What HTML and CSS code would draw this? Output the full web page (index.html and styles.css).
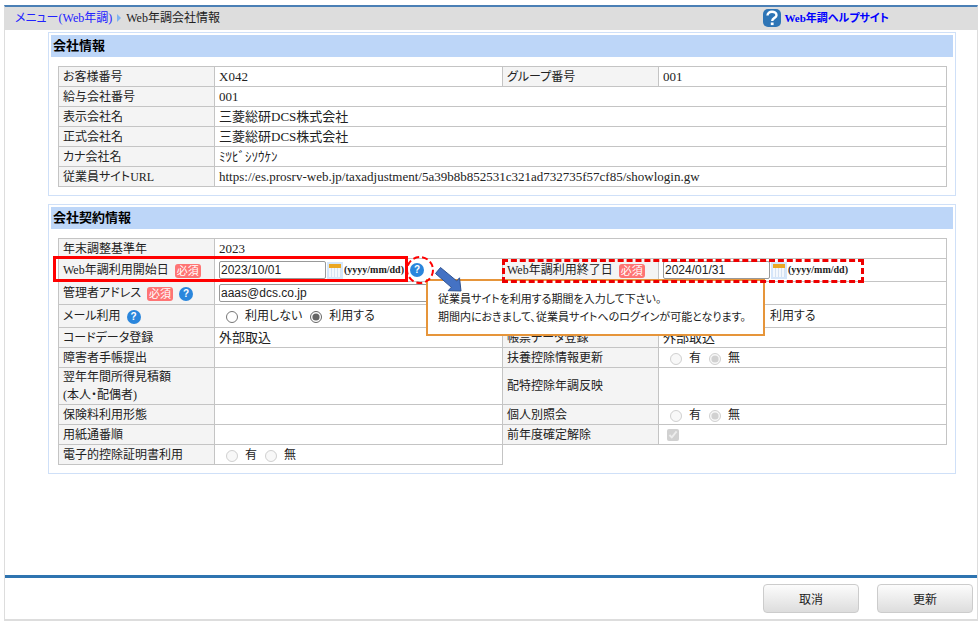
FILE: index.html
```
<!DOCTYPE html>
<html lang="ja">
<head>
    <meta charset="UTF-8">
    <meta name="viewport" content="width=device-width, initial-scale=1.0">
    <title>Web年調会社情報</title>
    <link rel="stylesheet" href="styles.css">
</head>
<body>
    <div class="window">
        <header class="topbar">
            <nav class="breadcrumb">
                <a href="#menu">メニュー(Web年調)</a>
                <svg class="crumb-arrow" viewBox="0 0 4 8"><path d="M0 0L4 4L0 8Z" fill="#7fb4f0"/></svg>
                <span>Web年調会社情報</span>
            </nav>
            <a class="help-site" href="#help">
                <svg class="help-site-icon" viewBox="0 0 18 18">
                    <rect width="18" height="18" rx="5" fill="#2e75b6"/>
                    <path d="M4.500 6.500C4.500 1.500 13.500 1.500 13.500 6.200C13.500 9 9.200 8.800 9.200 12" fill="none" stroke="#fff" stroke-width="2.400"/>
                    <rect x="7.800" y="13.500" width="2.800" height="2.600" fill="#fff"/>
                </svg>
                <span>Web年調ヘルプサイト</span>
            </a>
        </header>

        <main class="content">
            <section class="panel">
                <h2 class="panel-title">会社情報</h2>
                <table class="info-table">
                    <colgroup><col class="col-label"><col class="col-value"><col class="col-label"><col class="col-value"></colgroup>
                    <tr><th>お客様番号</th><td>X042</td><th>グループ番号</th><td>001</td></tr>
                    <tr><th>給与会社番号</th><td colspan="3">001</td></tr>
                    <tr><th>表示会社名</th><td colspan="3">三菱総研DCS株式会社</td></tr>
                    <tr><th>正式会社名</th><td colspan="3">三菱総研DCS株式会社</td></tr>
                    <tr><th>カナ会社名</th><td colspan="3">ﾐﾂﾋﾞｼｿｳｹﾝ</td></tr>
                    <tr><th>従業員サイトURL</th><td colspan="3">https://es.prosrv-web.jp/taxadjustment/5a39b8b852531c321ad732735f57cf85/showlogin.gw</td></tr>
                </table>
            </section>

            <section class="panel">
                <h2 class="panel-title">会社契約情報</h2>
                <table class="info-table">
                    <colgroup><col class="col-label"><col class="col-value"><col class="col-label"><col class="col-value"></colgroup>
                    <tr><th>年末調整基準年</th><td colspan="3">2023</td></tr>
                    <tr class="tall">
                        <th class="anchor">
                            <label for="start-date">Web年調利用開始日</label> <span class="required">必須</span>
                            <div class="mark mark-start"></div>
                        </th>
                        <td class="anchor">
                            <div class="date-field">
                                <input class="text date" id="start-date" type="text" value="2023/10/01">
                                <button class="calendar" type="button" aria-label="カレンダー"></button>
                                <span class="format">(yyyy/mm/dd)</span>
                                <button class="help" type="button">?</button>
                            </div>
                            <svg class="mark-help" viewBox="0 0 58 40">
                                <ellipse cx="13" cy="14" rx="13" ry="13" fill="none" stroke="#f00" stroke-width="2" stroke-dasharray="6 3"/>
                                <path d="M33.500 11.500L49.800 25L52.500 21.800L54 35L41.200 34.700L44.300 31.300L28.500 17.500Z" fill="#4472c4" stroke="#2f528f"/>
                            </svg>
                            <div class="tooltip" role="tooltip">従業員サイトを利用する期間を入力して下さい。<br>期間内におきまして、従業員サイトへのログインが可能となります。</div>
                        </td>
                        <th class="anchor">
                            <label for="end-date">Web年調利用終了日</label> <span class="required">必須</span>
                            <div class="mark mark-end"></div>
                        </th>
                        <td>
                            <div class="date-field">
                                <input class="text date" id="end-date" type="text" value="2024/01/31">
                                <button class="calendar" type="button" aria-label="カレンダー"></button>
                                <span class="format">(yyyy/mm/dd)</span>
                            </div>
                        </td>
                    </tr>
                    <tr class="tall">
                        <th><label for="admin-mail">管理者アドレス</label> <span class="required">必須</span> <button class="help" type="button">?</button></th>
                        <td colspan="3"><input class="text mail" id="admin-mail" type="text" value="aaas@dcs.co.jp"></td>
                    </tr>
                    <tr class="tall">
                        <th>メール利用 <button class="help" type="button">?</button></th>
                        <td>
                            <div class="choices">
                                <label><input type="radio" name="mail-use">利用しない</label>
                                <label><input type="radio" name="mail-use" checked>利用する</label>
                            </div>
                        </td>
                        <th></th>
                        <td>
                            <div class="choices choices-end">
                                <label><input type="radio" name="notice-use" checked>利用する</label>
                            </div>
                        </td>
                    </tr>
                    <tr><th>コードデータ登録</th><td>外部取込</td><th>帳票データ登録</th><td>外部取込</td></tr>
                    <tr>
                        <th>障害者手帳提出</th><td></td>
                        <th>扶養控除情報更新</th>
                        <td>
                            <div class="choices">
                                <label><input type="radio" name="dependents" disabled>有</label>
                                <label><input type="radio" name="dependents" checked disabled>無</label>
                            </div>
                        </td>
                    </tr>
                    <tr><th>翌年年間所得見積額<br>(本人・配偶者)</th><td></td><th>配特控除年調反映</th><td></td></tr>
                    <tr>
                        <th>保険料利用形態</th><td></td>
                        <th>個人別照会</th>
                        <td>
                            <div class="choices">
                                <label><input type="radio" name="personal" disabled>有</label>
                                <label><input type="radio" name="personal" checked disabled>無</label>
                            </div>
                        </td>
                    </tr>
                    <tr>
                        <th>用紙通番順</th><td></td>
                        <th><label for="unlock">前年度確定解除</label></th>
                        <td><input class="check" id="unlock" type="checkbox" checked disabled></td>
                    </tr>
                    <tr>
                        <th>電子的控除証明書利用</th>
                        <td>
                            <div class="choices">
                                <label><input type="radio" name="certificate" disabled>有</label>
                                <label><input type="radio" name="certificate" disabled>無</label>
                            </div>
                        </td>
                        <td class="blank" colspan="2"></td>
                    </tr>
                </table>
            </section>
        </main>

        <footer class="actions">
            <button class="button" type="button">取消</button>
            <button class="button" type="button">更新</button>
        </footer>
    </div>
</body>
</html>
```
FILE: styles.css
```
* {
    box-sizing: border-box;
}

body {
    margin: 0;
    padding: 5px 2px 2px 4px;
    background-color: #fff;
    color: #222;
    font-family: "Liberation Serif", "Noto Sans CJK JP", serif;
    font-size: 12px;
    font-feature-settings: "palt";
    line-height: 18px;
}

.window {
    display: flex;
    flex-direction: column;
    min-height: calc(100vh - 7px);
    border: 1px solid #ddd;
    border-top: 2px solid #4a7fb5;
    border-bottom-width: 2px;
}

.topbar {
    display: flex;
    justify-content: space-between;
    align-items: center;
    height: 23px;
    padding: 0 88px 2px 10px;
    background-color: #ddd;
}

.breadcrumb {
    display: flex;
    align-items: center;
    gap: 5px;
}

.breadcrumb a {
    color: #22f;
    text-decoration: none;
}

.crumb-arrow {
    width: 4px;
    height: 8px;
}

.help-site {
    display: flex;
    align-items: center;
    gap: 3px;
    color: #00f;
    font-size: 11px;
    font-weight: bold;
    text-decoration: none;
}

.help-site-icon {
    width: 18px;
    height: 18px;
}

.content {
    flex: 1;
    padding: 2px 21px 0 43px;
}

.panel {
    margin-bottom: 8px;
    padding: 2px 2px 8px;
    border: 1px solid #cfe0f8;
}

.panel-title {
    height: 22px;
    margin: 0 0 9px;
    padding: 0 2px;
    background-color: #bdd6f8;
    color: #000;
    font-size: 13px;
    line-height: 22px;
}

.info-table {
    width: calc(100% - 13px);
    margin-left: 7px;
    border-collapse: collapse;
    table-layout: fixed;
}

.col-label {
    width: 156px;
}

.info-table th,
.info-table td {
    height: 20px;
    padding: 0 4px;
    border: 1px solid #c4c4c4;
    line-height: 18px;
    text-align: left;
    white-space: nowrap;
}

.info-table th {
    background-color: #f4f4f4;
    font-weight: normal;
}

.info-table td {
    font-size: 13px;
}

.info-table .tall th,
.info-table .tall td {
    height: 23px;
}

.info-table .blank {
    border: none;
}

.anchor {
    position: relative;
}

.required {
    display: inline-block;
    margin-left: 3px;
    padding: 0 2px;
    border-radius: 3px;
    background-color: #fe7474;
    color: #fff;
    font-size: 11px;
    line-height: 14px;
    vertical-align: middle;
}

.help {
    width: 14px;
    height: 14px;
    margin: 0 3px;
    padding: 0;
    border: none;
    border-radius: 50%;
    background-color: #2a86dc;
    color: #fff;
    font: bold 10px/14px "Liberation Sans", sans-serif;
    text-align: center;
    vertical-align: middle;
}

.text {
    display: block;
    height: 18px;
    padding: 0 1px;
    border: 1px solid #999;
    border-radius: 2px;
    color: #222;
    font-family: "Liberation Sans", sans-serif;
    font-size: 12px;
}

.date {
    width: 107px;
}

.mail {
    width: 260px;
}

.date-field {
    display: flex;
    align-items: center;
}

.calendar {
    width: 16px;
    height: 17px;
    margin: 0 1px;
    padding: 0;
    border: 2px solid #d5e6fa;
    background: linear-gradient(#eba723 4px, transparent 4px),
        repeating-linear-gradient(90deg, #f4f8fd 0 2px, #d5e2f2 2px 3px);
}

.format {
    font-size: 10px;
    font-weight: bold;
}

.date-field .help {
    margin-left: 6px;
}

.choices {
    display: flex;
    gap: 8px;
    padding-left: 7px;
    font-size: 12px;
}

/* lines the single choice up with the second column of the pair */
.choices-end {
    padding-left: 88px;
}

.choices label {
    display: flex;
    align-items: center;
    gap: 7px;
}

.choices input {
    width: 12px;
    height: 12px;
    margin: 2px 0 0;
    accent-color: #666;
}

.check {
    display: block;
    width: 12px;
    height: 12px;
    margin: 0 4px;
}

/* guide marks drawn over the form */
.mark {
    position: absolute;
    z-index: 3;
    pointer-events: none;
}

.mark-start {
    top: -3px;
    left: -6px;
    width: 355px;
    height: 26px;
    border: 3px solid #f00;
}

.mark-end {
    top: 0;
    left: -1px;
    width: 362px;
    height: 24px;
    border: 3px dashed #e00;
}

.mark-help {
    position: absolute;
    z-index: 3;
    top: -3px;
    left: 192px;
    width: 58px;
    height: 40px;
    pointer-events: none;
    overflow: visible;
}

.tooltip {
    position: absolute;
    z-index: 2;
    top: 20px;
    left: 211px;
    padding: 9px 17px 8px 10px;
    border: 2px solid #e6953a;
    background-color: #fff;
    font-size: 11px;
}

.actions {
    display: flex;
    justify-content: flex-end;
    gap: 18px;
    padding: 6px 4px;
    border-top: 3px solid #2e74b0;
}

.button {
    width: 96px;
    height: 29px;
    border: 1px solid #ccc;
    border-radius: 4px;
    background: linear-gradient(#fcfcfc, #ddd);
    color: #222;
    font-family: "Noto Sans CJK JP", sans-serif;
    font-size: 12px;
}
```
